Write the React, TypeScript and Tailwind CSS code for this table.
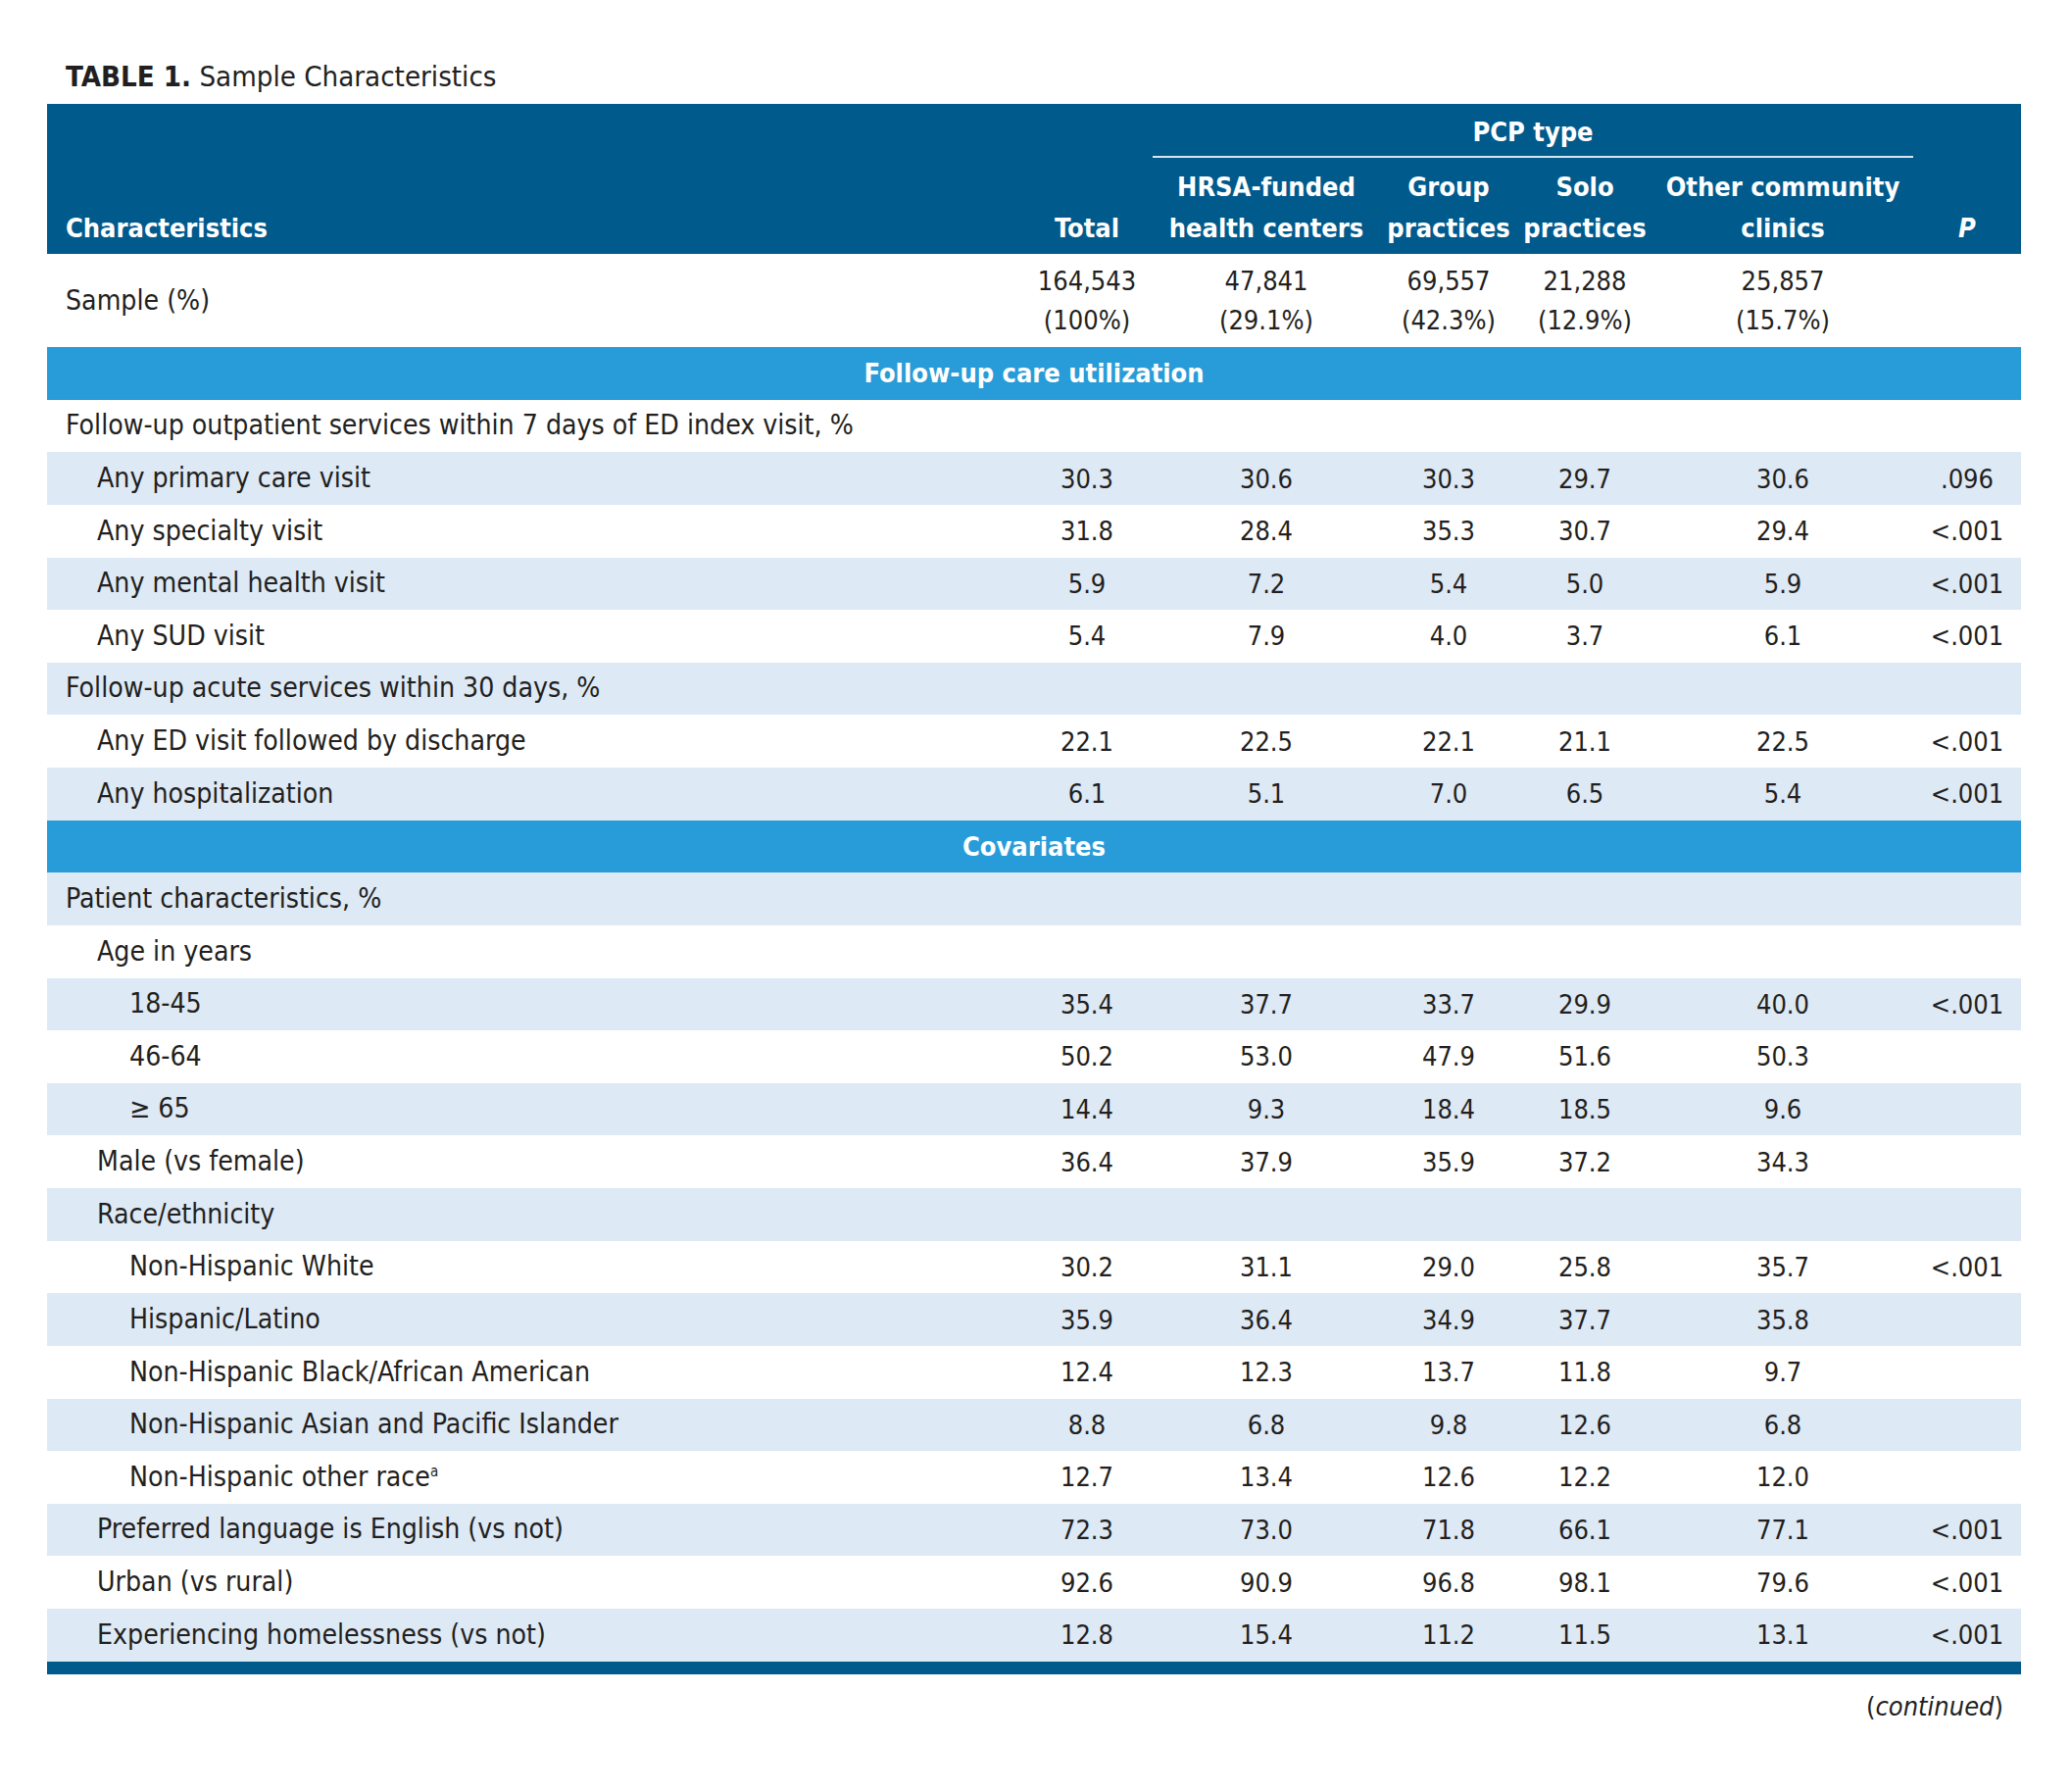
import React from 'react';

type Row = {
  label: React.ReactNode;
  level: 0 | 1 | 2;
  shade: boolean;
  values?: string[];
  p?: string;
};

type Band = { band: string };

const body: (Row | Band)[] = [
  { band: 'Follow-up care utilization' },
  { label: 'Follow-up outpatient services within 7 days of ED index visit, %', level: 0, shade: false },
  { label: 'Any primary care visit', level: 1, shade: true, values: ['30.3', '30.6', '30.3', '29.7', '30.6'], p: '.096' },
  { label: 'Any specialty visit', level: 1, shade: false, values: ['31.8', '28.4', '35.3', '30.7', '29.4'], p: '<.001' },
  { label: 'Any mental health visit', level: 1, shade: true, values: ['5.9', '7.2', '5.4', '5.0', '5.9'], p: '<.001' },
  { label: 'Any SUD visit', level: 1, shade: false, values: ['5.4', '7.9', '4.0', '3.7', '6.1'], p: '<.001' },
  { label: 'Follow-up acute services within 30 days, %', level: 0, shade: true },
  { label: 'Any ED visit followed by discharge', level: 1, shade: false, values: ['22.1', '22.5', '22.1', '21.1', '22.5'], p: '<.001' },
  { label: 'Any hospitalization', level: 1, shade: true, values: ['6.1', '5.1', '7.0', '6.5', '5.4'], p: '<.001' },
  { band: 'Covariates' },
  { label: 'Patient characteristics, %', level: 0, shade: true },
  { label: 'Age in years', level: 1, shade: false },
  { label: '18-45', level: 2, shade: true, values: ['35.4', '37.7', '33.7', '29.9', '40.0'], p: '<.001' },
  { label: '46-64', level: 2, shade: false, values: ['50.2', '53.0', '47.9', '51.6', '50.3'] },
  { label: '≥ 65', level: 2, shade: true, values: ['14.4', '9.3', '18.4', '18.5', '9.6'] },
  { label: 'Male (vs female)', level: 1, shade: false, values: ['36.4', '37.9', '35.9', '37.2', '34.3'] },
  { label: 'Race/ethnicity', level: 1, shade: true },
  { label: 'Non-Hispanic White', level: 2, shade: false, values: ['30.2', '31.1', '29.0', '25.8', '35.7'], p: '<.001' },
  { label: 'Hispanic/Latino', level: 2, shade: true, values: ['35.9', '36.4', '34.9', '37.7', '35.8'] },
  { label: 'Non-Hispanic Black/African American', level: 2, shade: false, values: ['12.4', '12.3', '13.7', '11.8', '9.7'] },
  { label: 'Non-Hispanic Asian and Pacific Islander', level: 2, shade: true, values: ['8.8', '6.8', '9.8', '12.6', '6.8'] },
  {
    label: (
      <>
        Non-Hispanic other race<sup className="text-[15px] -top-[10px]">a</sup>
      </>
    ),
    level: 2,
    shade: false,
    values: ['12.7', '13.4', '12.6', '12.2', '12.0'],
  },
  { label: 'Preferred language is English (vs not)', level: 1, shade: true, values: ['72.3', '73.0', '71.8', '66.1', '77.1'], p: '<.001' },
  { label: 'Urban (vs rural)', level: 1, shade: false, values: ['92.6', '90.9', '96.8', '98.1', '79.6'], p: '<.001' },
  { label: 'Experiencing homelessness (vs not)', level: 1, shade: true, values: ['12.8', '15.4', '11.2', '11.5', '13.1'], p: '<.001' },
];

const cols = 'grid grid-cols-[994px_134px_232px_140px_138px_266px_110px]';

const indent = ['pl-[19px]', 'pl-[51px]', 'pl-[84px]'];

function DataRow({ row }: { row: Row }) {
  return (
    <div className={`${cols} h-[53.64px] items-center ${row.shade ? 'bg-[#dde9f5]' : 'bg-white'}`}>
      <div className={`${indent[row.level]} text-[28.2px]`}>{row.label}</div>
      {(row.values ?? ['', '', '', '', '']).map((v, i) => (
        <div key={i} className="text-center">
          {v}
        </div>
      ))}
      <div className="text-center">{row.p ?? ''}</div>
    </div>
  );
}

export default function App() {
  return (
    <div className="min-h-[1828px] w-[2113px] bg-white text-[#231f20] font-['DejaVu_Sans_Condensed','Liberation_Sans_Narrow','DejaVu_Sans',sans-serif] [font-stretch:condensed] text-[27px] leading-none">
      <div className="pl-[48px] pt-[62px]">
        <h1 className="pl-[19px] text-[29.2px] leading-[32px]">
          <span className="font-bold">TABLE 1.</span> Sample Characteristics
        </h1>

        <div className="mt-[12px] w-[2014px]">
          {/* header */}
          <div className={`${cols} h-[153px] bg-[#015a8c] text-white font-bold`}>
            <div className="pl-[19px] self-end pb-[13px]">Characteristics</div>
            <div className="text-center self-end pb-[13px]">Total</div>
            <div className="col-span-4 flex flex-col">
              <div className="h-[55px] pt-[4px] flex items-center justify-center border-b-2 border-[#d8e6f0]">PCP type</div>
              <div className="grid grid-cols-[232px_140px_138px_266px] flex-1 pt-[9px]">
                <div className="text-center leading-[42px]">HRSA-funded<br />health centers</div>
                <div className="text-center leading-[42px]">Group<br />practices</div>
                <div className="text-center leading-[42px]">Solo<br />practices</div>
                <div className="text-center leading-[42px]">Other community<br />clinics</div>
              </div>
            </div>
            <div className="text-center self-end pb-[13px] italic">P</div>
          </div>

          {/* sample size */}
          <div className={`${cols} h-[95px] items-center bg-white leading-[40px]`}>
            <div className="pl-[19px] text-[28.2px]">Sample (%)</div>
            <div className="text-center">164,543<br />(100%)</div>
            <div className="text-center">47,841<br />(29.1%)</div>
            <div className="text-center">69,557<br />(42.3%)</div>
            <div className="text-center">21,288<br />(12.9%)</div>
            <div className="text-center">25,857<br />(15.7%)</div>
            <div />
          </div>

          {body.map((r, i) =>
            'band' in r ? (
              <div key={i} className="h-[53.64px] flex items-center justify-center bg-[#289cd8] text-white font-bold">
                {r.band}
              </div>
            ) : (
              <DataRow key={i} row={r} />
            )
          )}

          <div className="h-[13px] bg-[#015a8c]" />

          <div className="flex justify-end pr-[18px] pt-[19px]">
            (<span className="italic">continued</span>)
          </div>
        </div>
      </div>
    </div>
  );
}
